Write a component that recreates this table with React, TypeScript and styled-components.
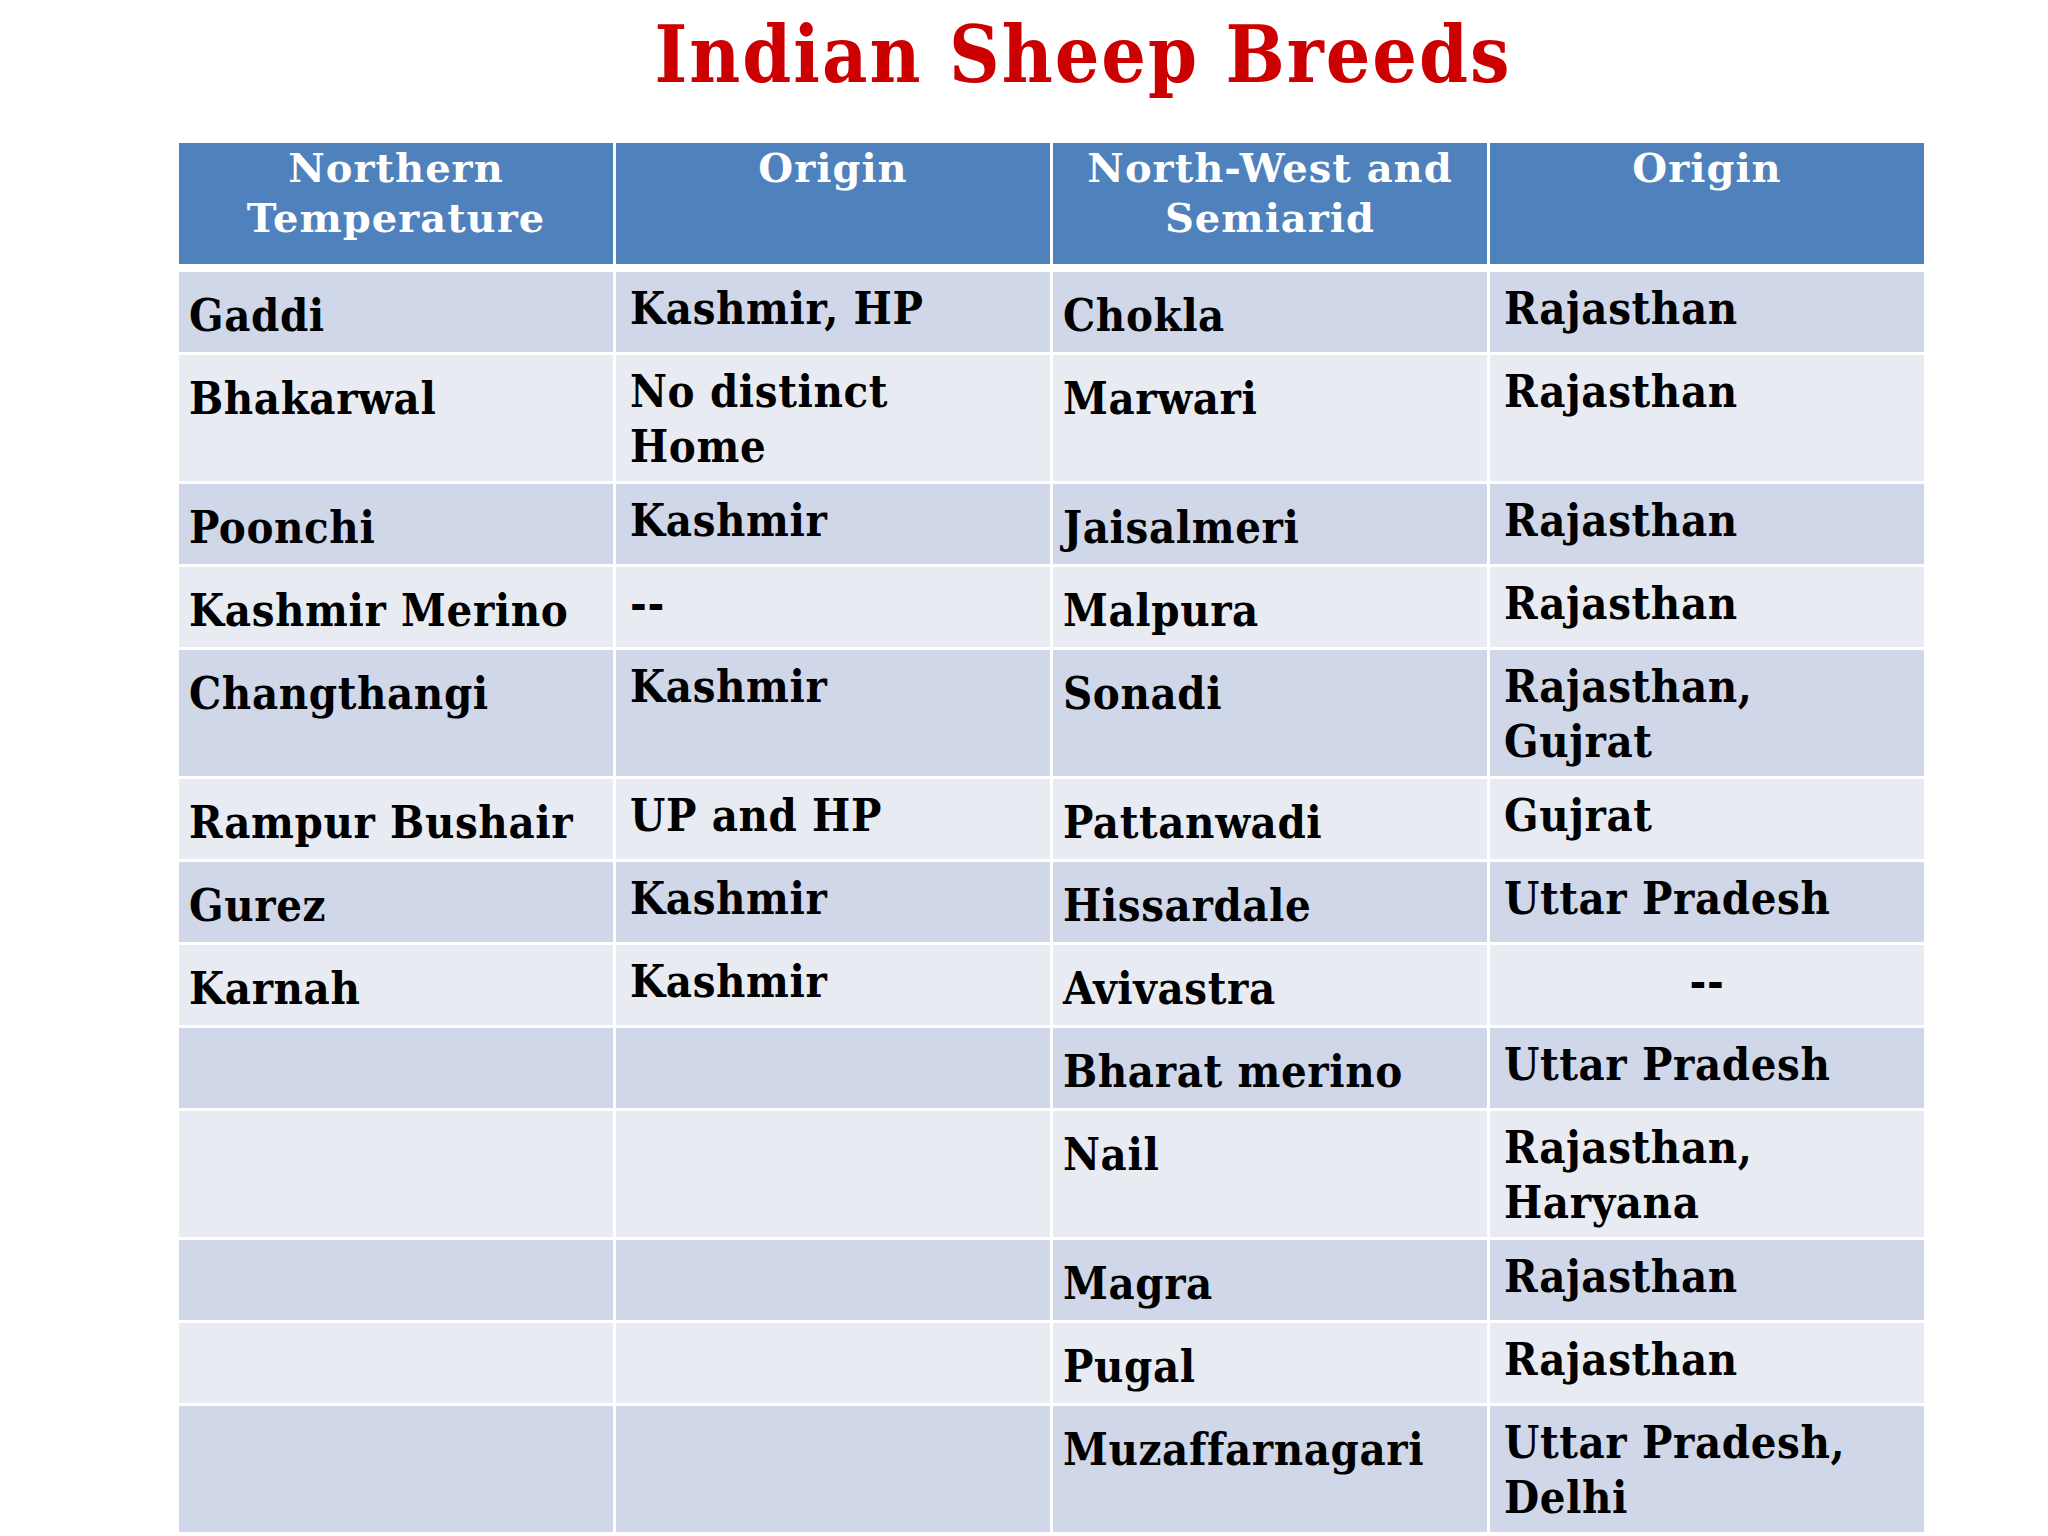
import styled, { createGlobalStyle } from "styled-components";

const GlobalStyle = createGlobalStyle`
  html, body {
    margin: 0;
    padding: 0;
    background: #ffffff;
  }
`;

const serif = `"DejaVu Serif Condensed", "DejaVu Serif", "Liberation Serif", serif`;
const wideSerif = `"DejaVu Serif", "Liberation Serif", serif`;

const Page = styled.div`
  width: 2048px;
  height: 1536px;
  overflow: hidden;
  background: #ffffff;
  font-family: ${serif};
  font-weight: 700;
`;

const Title = styled.h1`
  margin: 0 0 50px 0;
  padding: 16px 0 0 118px;
  height: 77px;
  text-align: center;
  font-size: 78px;
  line-height: 78px;
  letter-spacing: 2px;
  color: #cc0000;
  font-weight: 700;
  white-space: nowrap;
`;

const Table = styled.div`
  margin-left: 179px;
  width: 1746px;
  display: flex;
  flex-direction: column;
  gap: 3px;
`;

const HeadRow = styled.div`
  display: grid;
  grid-template-columns: repeat(4, 434px);
  column-gap: 3px;
  height: 121px;
  margin-bottom: 5px;
`;

const HeadCell = styled.div`
  background: #4f81bd;
  color: #ffffff;
  text-align: center;
  font-family: ${wideSerif};
  font-size: 40px;
  line-height: 50px;
  letter-spacing: 1px;
  white-space: nowrap;
`;

const Row = styled.div<{ $tall?: boolean }>`
  display: grid;
  grid-template-columns: repeat(4, 434px);
  column-gap: 3px;
  height: ${(p) => (p.$tall ? "126px" : "80px")};
`;

const Cell = styled.div<{ $even: boolean; $lead: boolean; $center?: boolean }>`
  background: ${(p) => (p.$even ? "#e9ebf3" : "#cfd7e8")};
  color: #000000;
  font-size: 45px;
  line-height: 55px;
  letter-spacing: 0.6px;
  white-space: nowrap;
  text-align: ${(p) => (p.$center ? "center" : "left")};
  padding: ${(p) => (p.$lead ? "16px 0 0 10px" : "9px 0 0 14px")};
  ${(p) => p.$center && "padding-left: 0;"}
`;

interface IBreed {
  north: string;
  northOrigin: string[];
  west: string;
  westOrigin: string[];
  tall?: boolean;
  centerLast?: boolean;
}

const breeds: IBreed[] = [
  { north: "Gaddi", northOrigin: ["Kashmir, HP"], west: "Chokla", westOrigin: ["Rajasthan"] },
  { north: "Bhakarwal", northOrigin: ["No distinct", "Home"], west: "Marwari", westOrigin: ["Rajasthan"], tall: true },
  { north: "Poonchi", northOrigin: ["Kashmir"], west: "Jaisalmeri", westOrigin: ["Rajasthan"] },
  { north: "Kashmir Merino", northOrigin: ["--"], west: "Malpura", westOrigin: ["Rajasthan"] },
  { north: "Changthangi", northOrigin: ["Kashmir"], west: "Sonadi", westOrigin: ["Rajasthan,", "Gujrat"], tall: true },
  { north: "Rampur Bushair", northOrigin: ["UP and HP"], west: "Pattanwadi", westOrigin: ["Gujrat"] },
  { north: "Gurez", northOrigin: ["Kashmir"], west: "Hissardale", westOrigin: ["Uttar Pradesh"] },
  { north: "Karnah", northOrigin: ["Kashmir"], west: "Avivastra", westOrigin: ["--"], centerLast: true },
  { north: "", northOrigin: [], west: "Bharat merino", westOrigin: ["Uttar Pradesh"] },
  { north: "", northOrigin: [], west: "Nail", westOrigin: ["Rajasthan,", "Haryana"], tall: true },
  { north: "", northOrigin: [], west: "Magra", westOrigin: ["Rajasthan"] },
  { north: "", northOrigin: [], west: "Pugal", westOrigin: ["Rajasthan"] },
  { north: "", northOrigin: [], west: "Muzaffarnagari", westOrigin: ["Uttar Pradesh,", "Delhi"], tall: true },
];

function Lines({ lines }: { lines: string[] }) {
  return (
    <>
      {lines.map((l, i) => (
        <div key={i}>{l}</div>
      ))}
    </>
  );
}

export default function App() {
  return (
    <Page>
      <GlobalStyle />
      <Title>Indian Sheep Breeds</Title>
      <Table>
        <HeadRow>
          <HeadCell>Northern<br />Temperature</HeadCell>
          <HeadCell>Origin</HeadCell>
          <HeadCell>North-West and<br />Semiarid</HeadCell>
          <HeadCell>Origin</HeadCell>
        </HeadRow>
        {breeds.map((b, i) => {
          const even = i % 2 === 1;
          return (
            <Row key={b.west} $tall={b.tall}>
              <Cell $even={even} $lead>{b.north}</Cell>
              <Cell $even={even} $lead={false}><Lines lines={b.northOrigin} /></Cell>
              <Cell $even={even} $lead>{b.west}</Cell>
              <Cell $even={even} $lead={false} $center={b.centerLast}><Lines lines={b.westOrigin} /></Cell>
            </Row>
          );
        })}
      </Table>
    </Page>
  );
}
